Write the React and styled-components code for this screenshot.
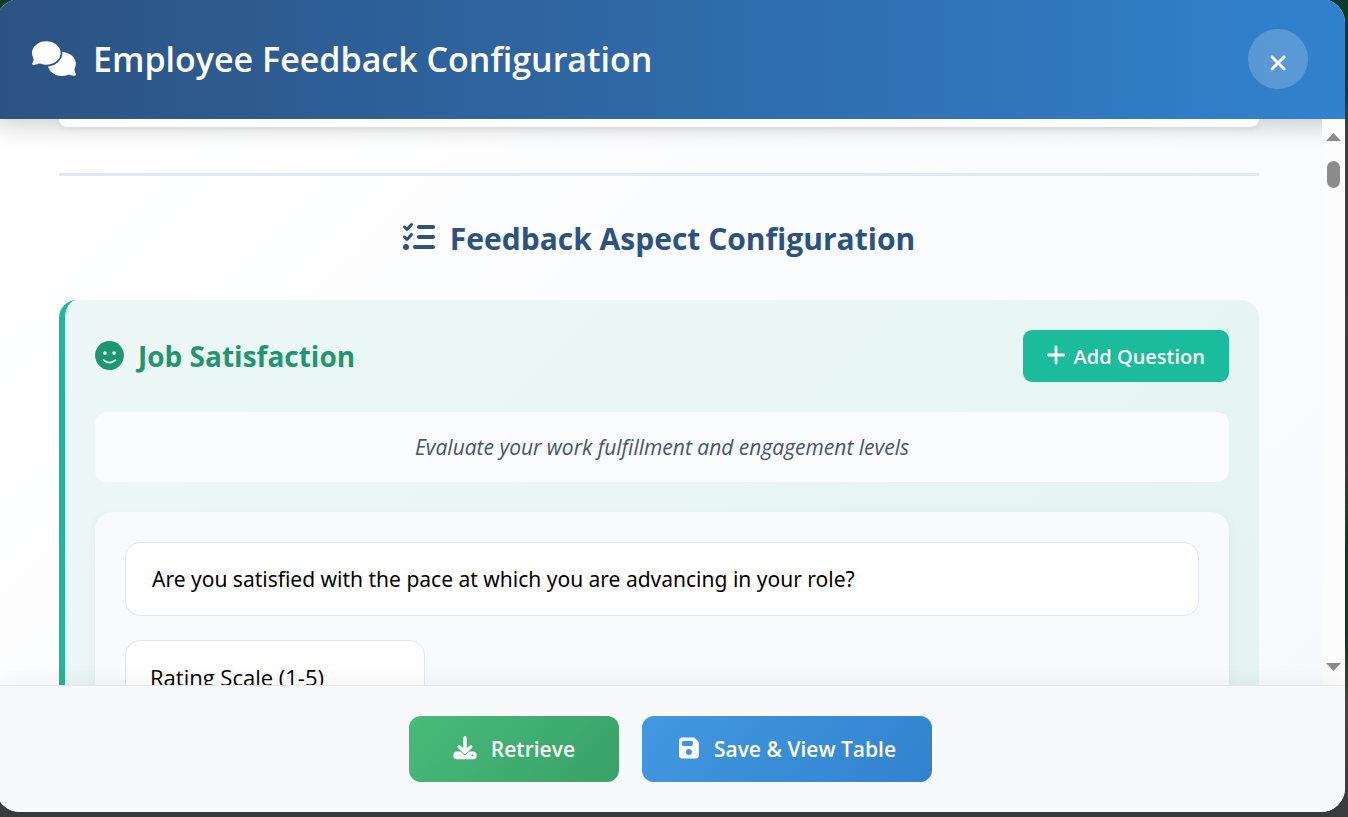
import React from "react";
import styled, { createGlobalStyle } from "styled-components";
import { FaListCheck, FaXmark } from "react-icons/fa6";

const GlobalStyle = createGlobalStyle`
  * { box-sizing: border-box; }
  body {
    margin: 0;
    font-family: "Segoe UI", "Open Sans", "Noto Sans", sans-serif;
    background: #3c3c3e;
  }
  button, input, select { font-family: inherit; }
`;

const Backdrop = styled.div`
  height: 100vh;
  overflow: hidden;
  display: flex;
  background: linear-gradient(
    to bottom,
    #0b3a2c 0%,
    #0f3a2e 10%,
    #3f3f3f 16%,
    #3c3c3c 58%,
    #0d3a22 68%,
    #0d3a22 78%,
    #454545 86%,
    #3a3a3c 100%
  );
`;

const Modal = styled.main`
  flex: 1;
  margin: -1px 3px 5px -4px;
  display: flex;
  flex-direction: column;
  overflow: hidden;
  border-radius: 24px;
  background: linear-gradient(135deg, #ffffff 0%, #f8f9fc 100%);
`;

const Header = styled.header`
  display: flex;
  align-items: center;
  justify-content: space-between;
  padding: 30px 37px 30px 36px;
  color: #fff;
  background: linear-gradient(90deg, #2c5282 0%, #3182ce 100%);
  box-shadow: 0 6px 24px rgba(0, 0, 0, 0.2);
`;

const Title = styled.h1`
  display: flex;
  align-items: center;
  gap: 16px;
  margin: 0;
  font-size: 34px;
  line-height: 48px;
  font-weight: 600;
`;

const CloseButton = styled.button`
  display: flex;
  align-items: center;
  justify-content: center;
  width: 60px;
  height: 60px;
  padding: 8px 0 0;
  border: 0;
  border-radius: 50%;
  color: #fff;
  background: rgba(255, 255, 255, 0.2);
`;

const Body = styled.div`
  position: relative;
  flex: 1;
  min-height: 0;
  display: flex;
`;

const Content = styled.div`
  flex: 1;
  min-width: 0;
  overflow: hidden;
  padding: 0 36px;
`;

const Column = styled.div`
  max-width: 1200px;
  margin: 0 auto;
`;

const PreviousCard = styled.div`
  height: 8px;
  border-radius: 0 0 12px 12px;
  background: #fff;
  box-shadow: 0 2px 6px rgba(0, 0, 0, 0.08);
`;

const Divider = styled.hr`
  height: 3px;
  margin: 46px 0 0;
  border: 0;
  background: #e2e8f0;
`;

const SectionTitle = styled.h2`
  display: flex;
  align-items: center;
  justify-content: center;
  gap: 15px;
  margin: 42px 0 40px;
  font-size: 30px;
  line-height: 42px;
  font-weight: 700;
  color: #2c5282;

  svg {
    margin-bottom: 4px;
  }
`;

const AspectCard = styled.section`
  padding: 30px;
  border-left: 6px solid #1fb899;
  border-radius: 18px;
  background: linear-gradient(135deg, #edf8f6 0%, #e4f4f0 100%);
`;

const AspectHeader = styled.div`
  display: flex;
  align-items: center;
  justify-content: space-between;
`;

const AspectTitle = styled.h3`
  display: flex;
  align-items: center;
  gap: 14px;
  margin: 0;
  font-size: 28px;
  line-height: 40px;
  font-weight: 700;
  color: #1e9770;
`;

const AddButton = styled.button`
  display: flex;
  align-items: center;
  justify-content: center;
  gap: 9px;
  height: 52px;
  padding: 0 24px;
  border: 0;
  border-radius: 9px;
  font-size: 20px;
  font-weight: 600;
  color: #fff;
  background: #1abc9c;
`;

const Description = styled.p`
  margin: 30px 0;
  padding: 20px;
  border-radius: 12px;
  font-size: 21px;
  line-height: 30px;
  font-style: italic;
  text-align: center;
  color: #4a5568;
  background: #f9fbfd;
`;

const QuestionCard = styled.div`
  display: flex;
  flex-direction: column;
  gap: 24px;
  padding: 30px;
  border-radius: 18px;
  background: #f9fafc;
  box-shadow: 0 3px 12px rgba(0, 0, 0, 0.05);
`;

const QuestionInput = styled.input`
  width: 100%;
  height: 74px;
  padding: 0 26px;
  border: 1px solid #e2e8f0;
  border-radius: 15px;
  font-family: "Segoe UI", "Noto Sans", sans-serif;
  font-size: 21px;
  color: #000;
  background: #fff;
`;

const TypeSelect = styled.select`
  appearance: none;
  width: 300px;
  height: 74px;
  padding: 0 24px;
  border: 1px solid #e2e8f0;
  border-radius: 15px;
  font-size: 22px;
  color: #000;
  background: #fff;
`;

const ScrollTrack = styled.div`
  display: flex;
  flex-direction: column;
  align-items: center;
  width: 23px;
  padding: 14px 0;
  background: #fcfcfc;
`;

const ScrollThumb = styled.div`
  width: 13px;
  height: 27px;
  margin: 20px 0 auto;
  border-radius: 7px;
  background: #8b8b8b;
`;

const Footer = styled.footer`
  position: relative;
  display: flex;
  justify-content: center;
  gap: 23px;
  padding: 30px;
  border-top: 1px solid #e2e8f0;
  background: #f7f9fb;
  box-shadow: 0 -4px 20px rgba(0, 0, 0, 0.05);
`;

const ActionButton = styled.button`
  display: flex;
  align-items: center;
  justify-content: center;
  gap: 14px;
  min-width: 210px;
  height: 66px;
  padding: 0 36px;
  border: 0;
  border-radius: 12px;
  font-size: 21px;
  font-weight: 600;
  color: #fff;
  background: ${({ $tone }) =>
    $tone === "green"
      ? "linear-gradient(135deg, #48bb78, #38a169)"
      : "linear-gradient(135deg, #4299e1, #3182ce)"};
`;

const CommentsIcon = () => (
  <svg width="45" height="40" viewBox="0 0 45 40" aria-hidden="true">
    <mask id="behind-front-bubble">
      <rect width="45" height="40" fill="#fff" />
      <ellipse cx="14.3" cy="14" rx="16" ry="13.4" fill="#000" />
    </mask>
    <g fill="currentColor">
      <ellipse cx="14.3" cy="14" rx="14.3" ry="11.8" />
      <path d="M1.6 18.8Q1.9 21.6.3 24.2Q-.2 25.8 1.4 25.9Q5.2 25.9 8.8 23.8Z" />
      <g mask="url(#behind-front-bubble)">
        <ellipse cx="29.8" cy="25" rx="14" ry="12" />
        <path d="M42.5 29.8Q42.2 32.6 43.8 35Q44.4 36.6 42.8 36.8Q38.9 36.9 35.4 34.8Z" />
      </g>
    </g>
  </svg>
);

const SmileIcon = () => (
  <svg width="29" height="30" viewBox="0 0 30 30" aria-hidden="true">
    <circle cx="15" cy="14.5" r="14.9" fill="currentColor" />
    <circle cx="10.3" cy="12" r="1.9" fill="#edf8f6" />
    <circle cx="19.7" cy="12" r="1.9" fill="#edf8f6" />
    <path d="M9 19.3Q15 24.4 21 19.3" fill="none" stroke="#edf8f6" strokeWidth="1.8" strokeLinecap="round" />
  </svg>
);

const PlusIcon = () => (
  <svg width="18" height="22" viewBox="0 0 18 22" aria-hidden="true">
    <path d="M9 2V18M1.2 10H16.8" stroke="currentColor" strokeWidth="2.8" strokeLinecap="round" />
  </svg>
);

const DownloadIcon = () => (
  <svg width="24" height="28" viewBox="0 0 24 28" aria-hidden="true">
    <path d="M4 16.6H7.6L12 20.6L16.4 16.6H20A3.6 3.6 0 0 1 23.6 20.2V21A3.2 3.2 0 0 1 20.4 24.2H3.6A3.2 3.2 0 0 1 .4 21V20.2A3.6 3.6 0 0 1 4 16.6Z" fill="currentColor" />
    <path d="M12 2.7V17M6.2 11.8L12 17.2L17.8 11.8" fill="none" stroke="currentColor" strokeWidth="3.4" strokeLinecap="round" strokeLinejoin="round" />
    <circle cx="19.6" cy="20.4" r=".9" fill="#40ab6d" />
  </svg>
);

const SaveIcon = () => (
  <svg width="22" height="26" viewBox="0 0 22 26" aria-hidden="true">
    <path
      fillRule="evenodd"
      fill="currentColor"
      transform="translate(0 1)"
      d="M3.5.5H15.2Q16.3.5 17.1 1.3L20 4.2Q20.8 5 20.8 6.1V18.3A3.2 3.2 0 0 1 17.6 21.5H4.2A3.2 3.2 0 0 1 1 18.3V3.5A3 3 0 0 1 3.5.5ZM5.2 3.9Q4.1 3.9 4.1 5V7.8Q4.1 8.9 5.2 8.9H13.7Q14.8 8.9 14.8 7.8V5Q14.8 3.9 13.7 3.9ZM10.9 12.1A2.9 2.9 0 1 0 10.9 17.9A2.9 2.9 0 1 0 10.9 12.1Z"
    />
  </svg>
);

const Arrow = ({ down }) => (
  <svg width="15" height="8" viewBox="0 0 15 8" aria-hidden="true">
    <path d={down ? "M0 0H15L7.5 8Z" : "M0 8H15L7.5 0Z"} fill="#8b8b8b" />
  </svg>
);

export default function App() {
  return (
    <>
      <GlobalStyle />
      <Backdrop>
        <Modal>
          <Header>
            <Title>
              <CommentsIcon />
              Employee Feedback Configuration
            </Title>
            <CloseButton type="button" aria-label="Close">
              <FaXmark size={24} />
            </CloseButton>
          </Header>
          <Body>
            <Content>
              <Column>
                <PreviousCard />
                <Divider />
                <SectionTitle>
                  <FaListCheck size={32} aria-hidden="true" />
                  Feedback Aspect Configuration
                </SectionTitle>
                <AspectCard>
                  <AspectHeader>
                    <AspectTitle>
                      <SmileIcon />
                      Job Satisfaction
                    </AspectTitle>
                    <AddButton type="button">
                      <PlusIcon />
                      Add Question
                    </AddButton>
                  </AspectHeader>
                  <Description>Evaluate your work fulfillment and engagement levels</Description>
                  <QuestionCard>
                    <QuestionInput
                      aria-label="Question"
                      defaultValue="Are you satisfied with the pace at which you are advancing in your role?"
                    />
                    <TypeSelect aria-label="Answer type">
                      <option>Rating Scale (1-5)</option>
                    </TypeSelect>
                  </QuestionCard>
                </AspectCard>
              </Column>
            </Content>
            <ScrollTrack>
              <Arrow />
              <ScrollThumb />
              <Arrow down />
            </ScrollTrack>
          </Body>
          <Footer>
            <ActionButton type="button" $tone="green">
              <DownloadIcon />
              Retrieve
            </ActionButton>
            <ActionButton type="button" $tone="blue">
              <SaveIcon />
              Save &amp; View Table
            </ActionButton>
          </Footer>
        </Modal>
      </Backdrop>
    </>
  );
}
